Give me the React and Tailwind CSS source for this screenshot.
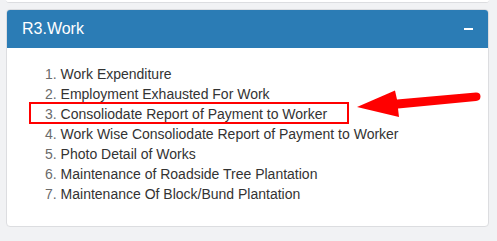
import React from "react";

const items = [
  "Work Expenditure",
  "Employment Exhausted For Work",
  "Consoliodate Report of Payment to Worker",
  "Work Wise Consoliodate Report of Payment to Worker",
  "Photo Detail of Works",
  "Maintenance of Roadside Tree Plantation",
  "Maintenance Of Block/Bund Plantation",
];

export default function App() {
  return (
    <div
      className="relative w-[497px] h-[241px] overflow-hidden bg-[#f1f2f4]"
      style={{ fontFamily: '"Liberation Sans", Arial, sans-serif' }}
    >
      <div className="ml-[6px] w-[483px] h-[3px] bg-white border-b border-[#dcdde0] rounded-b-[3px]" />
      <div className="ml-[6px] mt-[6px] w-[483px] h-[218px] bg-white border border-[#dcdde0] rounded-[4px] overflow-hidden flex flex-col">
        <div className="h-[38px] bg-[#2b7cb5] flex items-center justify-between pl-[15px] pr-[15px] shrink-0">
          <span className="text-white text-[16px] leading-none">R3.Work</span>
          <span className="block w-[9px] h-[2px] bg-white mt-[-1px]" />
        </div>
        <div className="relative pt-[16px] pl-[38px]">
          {items.map((t, i) => (
            <div key={i} className="text-[14px] leading-[20px] whitespace-nowrap">
              <span className="text-[#6b6b6b]">{i + 1}. </span>
              <span className="text-[#333]">{t}</span>
            </div>
          ))}
          <div className="absolute left-[22px] top-[54px] w-[320px] h-[22px] border-2 border-[#ff0000]" />
        </div>
      </div>
      <svg
        className="absolute left-0 top-0"
        width="497"
        height="241"
        viewBox="0 0 497 241"
      >
        <path d="M357 107 L395 90.5 L397 99.5 L476 92.5 Q480.5 92.5 480.5 96.5 Q480.5 100.5 476 101 L398 108.5 L399 117 Z" fill="#ff0000" />
      </svg>
    </div>
  );
}
